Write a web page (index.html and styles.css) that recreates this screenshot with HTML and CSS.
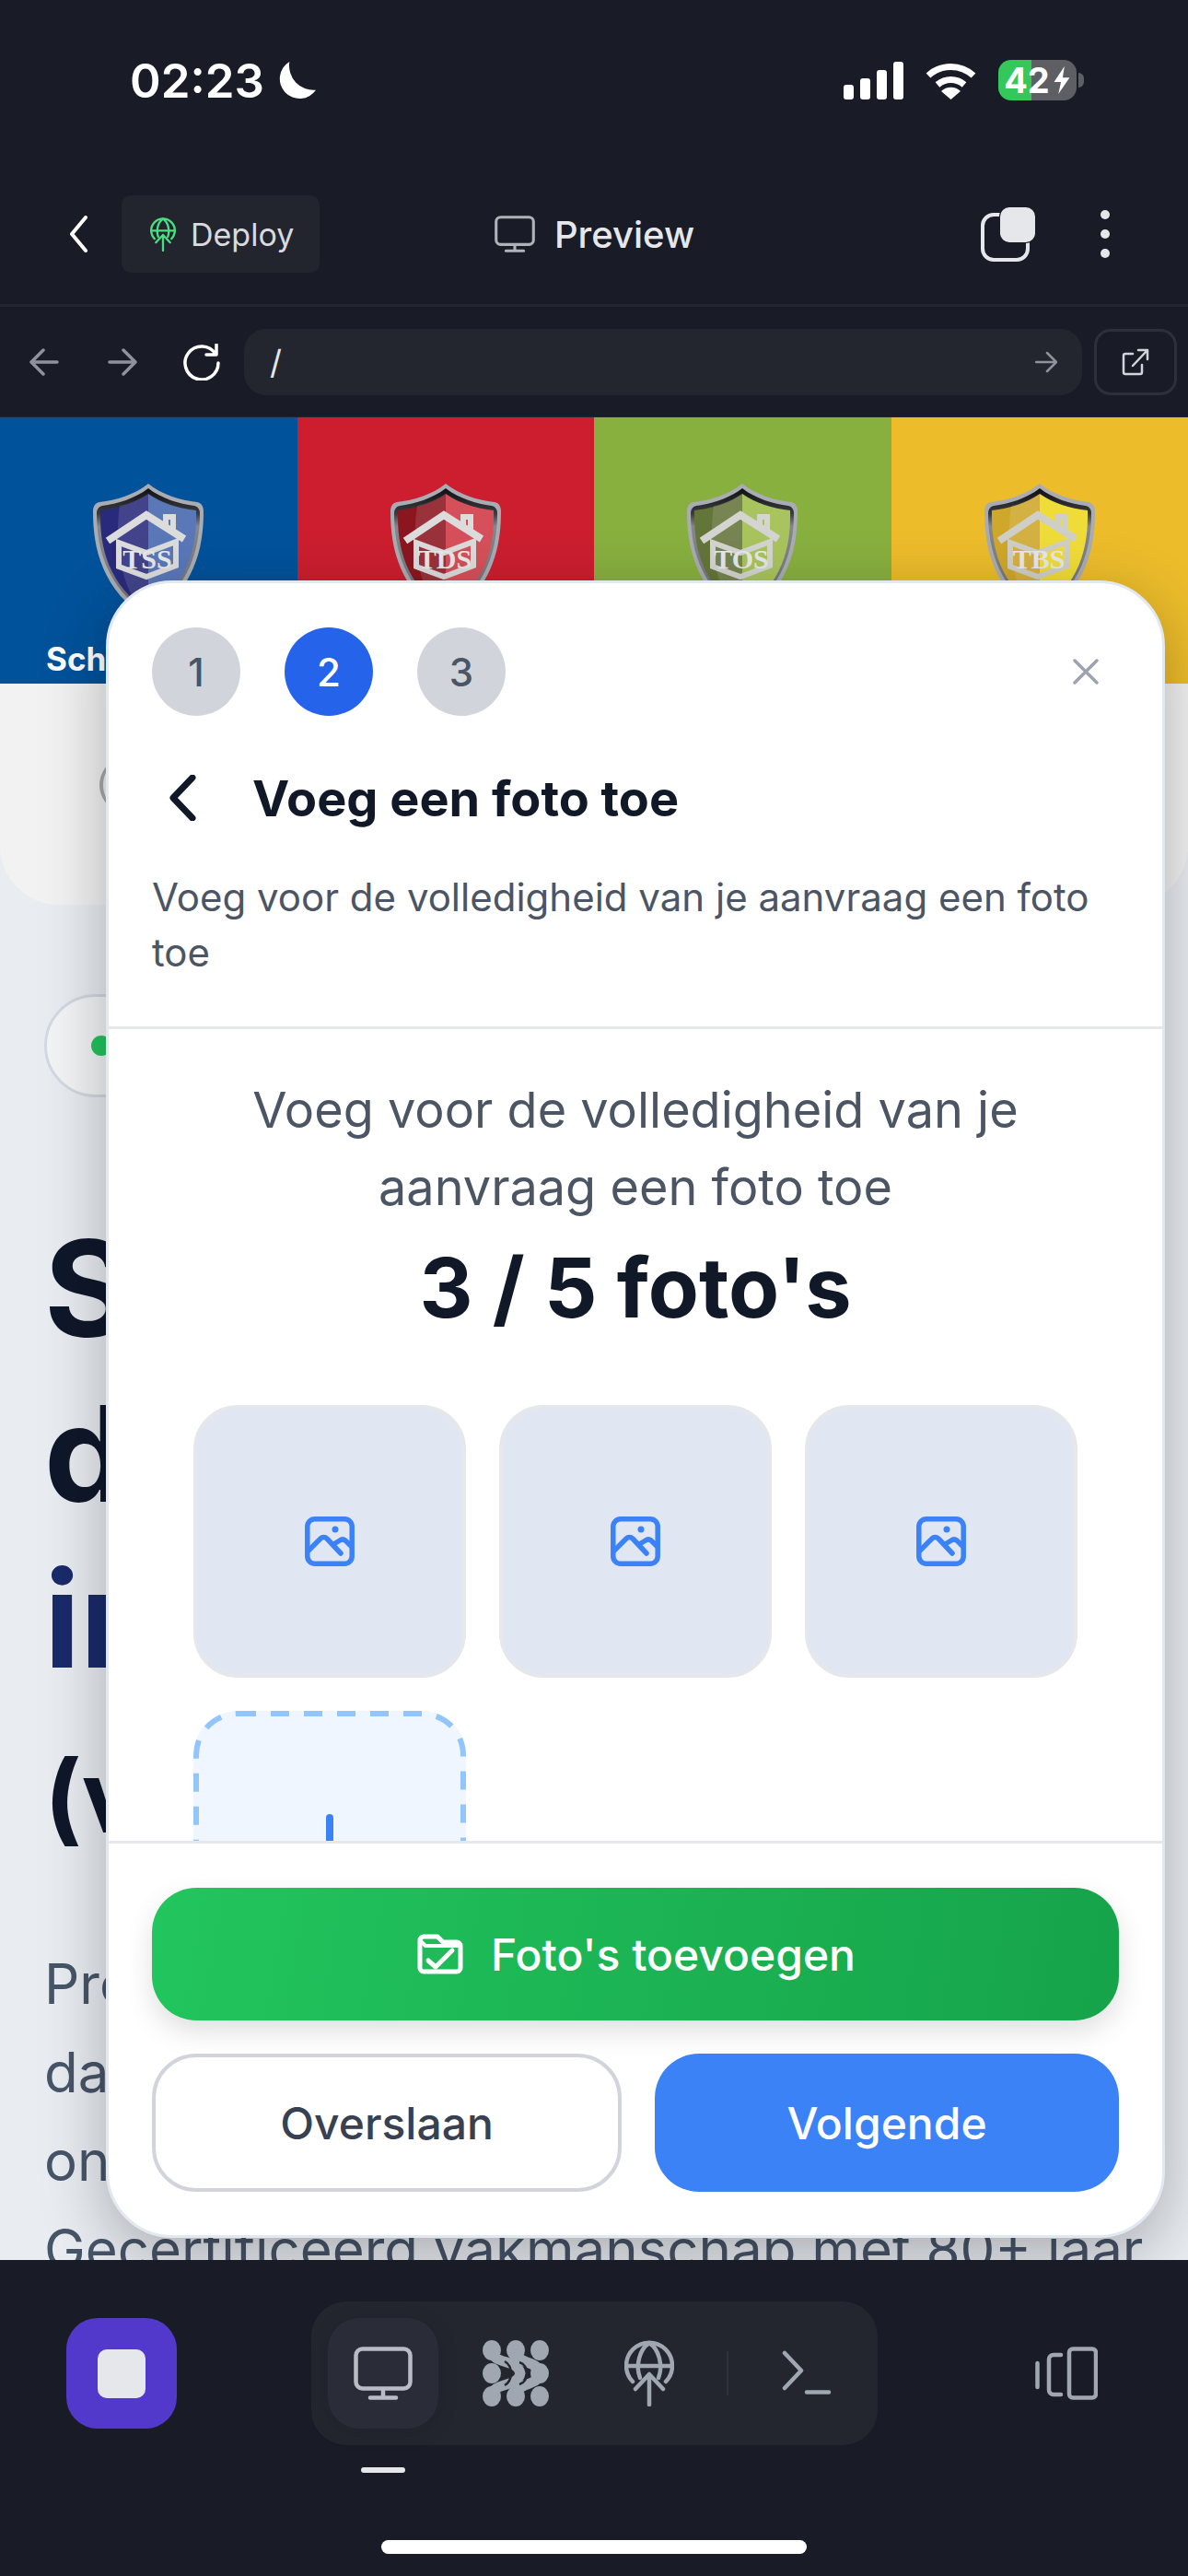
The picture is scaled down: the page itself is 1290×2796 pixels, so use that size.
FILE: index.html
```html
<!DOCTYPE html>
<html lang="nl">
<head>
  <meta charset="UTF-8" />
  <meta name="viewport" content="width=device-width, initial-scale=1.0"/>
  <title>Preview</title>
  <link rel="stylesheet" href="styles.css">
</head>
<body>

  <svg class="sprites" width="0" height="0" aria-hidden="true">
    <defs>
      <linearGradient id="shield-rim" x1="0" y1="0" x2="0" y2="1">
        <stop offset="0" stop-color="#111114"/>
        <stop offset="0.2" stop-color="#3a3b40"/>
        <stop offset="0.3" stop-color="#85878d"/>
        <stop offset="1" stop-color="#6d6f75"/>
      </linearGradient>
    </defs>
    <symbol id="i-monitor" viewBox="0 0 64 58">
      <rect x="2.500" y="2.500" width="59" height="43" rx="7" fill="none" stroke="currentColor" stroke-width="4.500"/>
      <path d="M32 46v8M18 55.500h28" fill="none" stroke="currentColor" stroke-width="4.500" stroke-linecap="round"/>
    </symbol>
    <symbol id="i-globe" viewBox="0 0 54 72">
      <g fill="none" stroke="currentColor" stroke-width="4.500" stroke-linecap="round" stroke-linejoin="round">
        <path d="M9 45A25 25 0 1 1 45 45"/>
        <path d="M2 28H52"/>
        <path d="M17 41C12 28 16 10 27 3C38 10 42 28 37 41"/>
        <path d="M27 70V37M12 53L27 37L42 53"/>
      </g>
    </symbol>
    <symbol id="i-photo" viewBox="0 0 54 54">
      <g fill="none" stroke="currentColor" stroke-width="5.500" stroke-linecap="round" stroke-linejoin="round">
        <rect x="2.800" y="2.800" width="48.400" height="48.400" rx="8"/>
        <path d="M4 37L17 24C19 22 22 22 24 24L39 40"/>
        <path d="M33 29L38 26C40 24.500 42 24.500 44 26L50 32"/>
      </g>
      <circle cx="33" cy="14" r="3.500" fill="currentColor"/>
    </symbol>
    <symbol id="i-shield" viewBox="0 0 120 150">
      <path d="M60 1C75 13 95 19 113 21C118 22 120 26 120 31C120 72 110 116 60 149C10 116 0 72 0 31C0 26 2 22 7 21C25 19 45 13 60 1Z" fill="#a9acb2"/>
      <path d="M60 6C74 17 94 23 110 25C114 26 116 29 116 33C116 72 105 113 60 144C15 113 4 72 4 33C4 29 6 26 10 25C26 23 46 17 60 6Z" fill="url(#shield-rim)"/>
      <path d="M60 12C46 22 27 28 8 30C7 72 17 110 60 140Z" style="fill:var(--shield-dark)"/>
      <path d="M60 12C74 22 93 28 112 30C113 72 103 110 60 140Z" style="fill:var(--shield-light)"/>
      <path d="M29 25C24 60 28 100 46 129L60 140V12C50 18 40 23 29 25Z" fill="#fff" opacity=".12"/>
      <g style="stroke:var(--shield-house)" fill="none">
        <path d="M16 63L58 35L99 61" stroke-width="8"/>
        <path d="M79 46V37H87V56" stroke-width="6"/>
        <path d="M28 65L58 76L90 64V90L58 102L28 91Z" stroke-width="6"/>
      </g>
    </symbol>
  </svg>

  <div class="phone">

    <header class="topbar">
      <div class="status">
        <div class="status-time">
          <span>02:23</span>
          <svg class="moon" viewBox="0 0 42 40"><path d="M14 0A21 21 0 1 0 42 30A26 26 0 0 1 14 0Z" fill="#fff"/></svg>
        </div>
        <div class="status-icons">
          <div class="signal"><i class="s1"></i><i class="s2"></i><i class="s3"></i><i class="s4"></i></div>
          <svg class="wifi" viewBox="0 0 57 42">
            <path d="M4 16A36 36 0 0 1 53 16M14 26A22 22 0 0 1 43 26" fill="none" stroke="#fff" stroke-width="7"/>
            <path d="M18 33A15 15 0 0 1 39 33L28.500 42Z" fill="#fff"/>
          </svg>
          <div class="battery">
            <div class="battery-body">
              <span>42</span>
              <svg class="bolt" viewBox="0 0 20 32"><path d="M13 0L1 18H9L6 32L19 13H11Z" fill="#fff"/></svg>
            </div>
            <div class="battery-nub"></div>
          </div>
        </div>
      </div>

      <div class="toolbar">
        <div class="toolbar-left">
          <svg class="back" viewBox="0 0 20 40"><path d="M18 2L3 20L18 38" fill="none" stroke="#fff" stroke-width="4" stroke-linecap="round" stroke-linejoin="round"/></svg>
          <button class="deploy">
            <svg class="deploy-icon"><use href="#i-globe"/></svg>
            Deploy
          </button>
        </div>
        <div class="toolbar-title">
          <svg class="title-icon"><use href="#i-monitor"/></svg>
          <span>Preview</span>
        </div>
        <div class="toolbar-right">
          <div class="copy-icon"><div class="copy-back"></div><div class="copy-front"></div></div>
          <div class="dots"><i></i><i></i><i></i></div>
        </div>
      </div>

      <div class="addressbar">
        <svg class="nav-arrow" viewBox="0 0 32 30"><path d="M30 15H3M15 2L2 15L15 28" fill="none" stroke="currentColor" stroke-width="3.500" stroke-linecap="round" stroke-linejoin="round"/></svg>
        <svg class="nav-arrow forward" viewBox="0 0 32 30"><path d="M2 15H29M17 2L30 15L17 28" fill="none" stroke="currentColor" stroke-width="3.500" stroke-linecap="round" stroke-linejoin="round"/></svg>
        <svg class="reload" viewBox="0 0 44 40"><path d="M37 11A18 18 0 1 0 40 21M38 1V12H27" fill="none" stroke="#fff" stroke-width="3.500" stroke-linecap="round" stroke-linejoin="round"/></svg>
        <div class="url">
          <span>/</span>
          <svg class="url-go" viewBox="0 0 24 24"><path d="M1 12H22M13 2L23 12L13 22" fill="none" stroke="currentColor" stroke-width="2.500" stroke-linecap="round" stroke-linejoin="round"/></svg>
        </div>
        <div class="open-external">
          <svg viewBox="0 0 30 30"><path d="M12 6H4A2 2 0 0 0 2 8V26A2 2 0 0 0 4 28H20A2 2 0 0 0 22 26V18M12 19L28 2M18 2H28V12" fill="none" stroke="#d1d5db" stroke-width="2.500" stroke-linecap="round" stroke-linejoin="round"/></svg>
        </div>
      </div>
    </header>

    <main class="page">
      <div class="tiles">
        <div class="tile tile-blue">
          <svg class="shield" viewBox="0 0 120 150"><use href="#i-shield"/><text x="59" y="93">TSS</text></svg>
          <div class="tile-label">Sch</div>
        </div>
        <div class="tile tile-red">
          <svg class="shield" viewBox="0 0 120 150"><use href="#i-shield"/><text x="59" y="93">TDS</text></svg>
        </div>
        <div class="tile tile-green">
          <svg class="shield" viewBox="0 0 120 150"><use href="#i-shield"/><text x="59" y="93">TOS</text></svg>
        </div>
        <div class="tile tile-yellow">
          <svg class="shield" viewBox="0 0 120 150"><use href="#i-shield"/><text x="59" y="93">TBS</text></svg>
        </div>
      </div>

      <div class="brand-card"><div class="brand-logo"></div></div>

      <section class="hero">
        <div class="pill"><i class="pill-dot"></i></div>
        <h1>Snel<br>door<br><span class="accent">in</span></h1>
        <h2>(v</h2>
        <p>Pro<br>da<br>on<br>Gecertificeerd vakmanschap met 80+ jaar</p>
      </section>

      <div class="modal">
        <div class="modal-head">
          <div class="steps-row">
            <div class="steps">
              <div class="step">1</div>
              <div class="step step-active">2</div>
              <div class="step">3</div>
            </div>
            <svg class="close" viewBox="0 0 28 28"><path d="M2 2L26 26M26 2L2 26" fill="none" stroke="currentColor" stroke-width="3.500" stroke-linecap="round"/></svg>
          </div>
          <div class="title-row">
            <svg class="modal-back" viewBox="0 0 30 50"><path d="M26 3L5 25L26 47" fill="none" stroke="#111827" stroke-width="7" stroke-linecap="round" stroke-linejoin="round"/></svg>
            <h3>Voeg een foto toe</h3>
          </div>
          <p class="modal-sub">Voeg voor de volledigheid van je aanvraag een foto toe</p>
        </div>

        <div class="modal-body">
          <p class="body-text">Voeg voor de volledigheid van je aanvraag een foto toe</p>
          <div class="count">3 / 5 foto's</div>
          <div class="photos">
            <div class="photo"><svg class="photo-icon"><use href="#i-photo"/></svg></div>
            <div class="photo"><svg class="photo-icon"><use href="#i-photo"/></svg></div>
            <div class="photo"><svg class="photo-icon"><use href="#i-photo"/></svg></div>
            <div class="photo photo-add">
              <svg class="dashes" viewBox="0 0 296 296"><rect x="3" y="3" width="290" height="290" rx="45" fill="none" stroke="#93c5fd" stroke-width="6" stroke-dasharray="20 16"/></svg>
              <i class="plus"></i>
            </div>
          </div>
        </div>

        <div class="modal-foot">
          <button class="btn btn-green">
            <svg class="folder" viewBox="0 0 50 44"><g fill="none" stroke="#fff" stroke-width="5" stroke-linecap="round" stroke-linejoin="round"><path d="M3 7A4 4 0 0 1 7 3H22L28 9H43A4 4 0 0 1 47 13V37A4 4 0 0 1 43 41H7A4 4 0 0 1 3 37Z"/><path d="M3 7L9 13H46" stroke-width="4"/><path d="M12 29L20 36L38 18"/></g></svg>
            Foto's toevoegen
          </button>
          <div class="btn-row">
            <button class="btn btn-outline">Overslaan</button>
            <button class="btn btn-blue">Volgende</button>
          </div>
        </div>
      </div>
    </main>

    <nav class="bottombar">
      <div class="bar-main">
        <div class="stop"><div class="stop-square"></div></div>
        <div class="tabs">
          <div class="tab-active"><svg class="tab-monitor"><use href="#i-monitor"/></svg></div>
          <svg class="tab-neural" viewBox="0 0 72 72">
            <g fill="#a0a7b1">
              <ellipse cx="10" cy="11" rx="10" ry="11"/><ellipse cx="36" cy="11" rx="10" ry="11"/><ellipse cx="62" cy="11" rx="10" ry="11"/>
              <ellipse cx="10" cy="36" rx="10" ry="11"/><ellipse cx="62" cy="36" rx="10" ry="11"/>
              <ellipse cx="10" cy="61" rx="10" ry="11"/><ellipse cx="36" cy="61" rx="10" ry="11"/><ellipse cx="62" cy="61" rx="10" ry="11"/>
            </g>
            <g fill="none" stroke="#a0a7b1" stroke-width="11">
              <path d="M10 11C10 27 38 20 41 36C38 52 10 45 10 61"/>
              <path d="M36 11C36 27 62 22 62 36C62 50 36 45 36 61"/>
            </g>
            <path d="M24 23C33 28 33 44 24 49" fill="none" stroke="#23262f" stroke-width="2.500"/>
            <path d="M40 24C51 27 51 45 40 48" fill="none" stroke="#23262f" stroke-width="2.500"/>
          </svg>
          <svg class="tab-globe"><use href="#i-globe"/></svg>
          <div class="tab-sep"></div>
          <svg class="tab-terminal" viewBox="0 0 54 50"><path d="M3 3L21 22L3 41M27 45.500H51" fill="none" stroke="currentColor" stroke-width="4.500" stroke-linecap="round" stroke-linejoin="round"/></svg>
        </div>
        <svg class="devices" viewBox="0 0 68 58"><g fill="none" stroke="currentColor" stroke-width="4.500" stroke-linecap="round" stroke-linejoin="round"><path d="M2.500 18V44"/><path d="M28 9H20A5 5 0 0 0 15 14V47A5 5 0 0 0 20 52H28"/><rect x="37" y="2.500" width="29" height="53" rx="4"/></g></svg>
      </div>
      <div class="tab-indicator"></div>
      <div class="home-indicator"></div>
    </nav>

  </div>

</body>
</html>
```

FILE: styles.css
```css
* {
  box-sizing: border-box;
}
body {
  margin: 0;
  font-family: Inter, "Noto Sans", sans-serif;
  background: #191c26;
}
i {
  display: block;
}
button {
  font-family: inherit;
  border: 0;
  padding: 0;
}
svg {
  display: block;
  flex: none;
}
.sprites {
  position: absolute;
}
.phone {
  width: 1290px;
  height: 2796px;
  display: flex;
  flex-direction: column;
  overflow: hidden;
}

/* top bars */
.topbar {
  background: #191c26;
  color: #fff;
}
.status {
  height: 178px;
  padding: 64px 113px 0 141px;
  display: flex;
  justify-content: space-between;
  align-items: flex-start;
}
.status-time {
  display: flex;
  align-items: center;
  gap: 13px;
  height: 46px;
  font-size: 51px;
  font-weight: 600;
}
.moon {
  width: 43px;
  height: 41px;
}
.status-icons {
  display: flex;
  align-items: center;
  gap: 23px;
  height: 46px;
}
.signal {
  display: flex;
  align-items: flex-end;
  gap: 7px;
  height: 41px;
}
.signal i {
  width: 11px;
  background: #fff;
  border-radius: 3px;
}
.s1 { height: 16px; }
.s2 { height: 23px; }
.s3 { height: 32px; }
.s4 { height: 41px; }
.wifi {
  width: 57px;
  height: 42px;
}
.battery {
  display: flex;
  align-items: center;
  gap: 2px;
}
.battery-body {
  width: 85px;
  height: 44px;
  border-radius: 14px;
  background: linear-gradient(90deg, #34c759 42%, #5e5f65 42%);
  display: flex;
  align-items: center;
  justify-content: center;
  gap: 3px;
  font-size: 38px;
  font-weight: 700;
}
.bolt {
  width: 20px;
  height: 30px;
}
.battery-nub {
  width: 6px;
  height: 16px;
  background: #5e5f65;
  border-radius: 0 6px 6px 0;
}
.toolbar {
  height: 152px;
  display: grid;
  grid-template-columns: 1fr auto 1fr;
  align-items: center;
  padding: 0 85px 0 75px;
}
.toolbar-left {
  display: flex;
  align-items: center;
  gap: 37px;
}
.back {
  width: 20px;
  height: 40px;
}
.deploy {
  width: 215px;
  height: 84px;
  background: #22252e;
  border-radius: 10px;
  color: #d8dae0;
  font-size: 34px;
  display: flex;
  align-items: center;
  padding-left: 31px;
  gap: 16px;
}
.deploy-icon {
  width: 28px;
  height: 37px;
  color: #4ade80;
}
.toolbar-title {
  margin-left: 11px;
  display: flex;
  align-items: center;
  gap: 21px;
  font-size: 40px;
  font-weight: 500;
  color: #e5e7eb;
}
.title-icon {
  width: 44px;
  height: 40px;
  color: #aeb2b9;
}
.toolbar-right {
  display: flex;
  justify-content: flex-end;
  align-items: center;
  gap: 71px;
}
.copy-icon {
  width: 59px;
  height: 59px;
  position: relative;
}
.copy-back {
  position: absolute;
  left: 0;
  bottom: 0;
  width: 53px;
  height: 53px;
  border: 4px solid #e5e7eb;
  border-radius: 14px;
}
.copy-front {
  position: absolute;
  right: 0;
  top: 0;
  width: 38px;
  height: 38px;
  background: #e5e7eb;
  border-radius: 10px;
  box-shadow: 0 0 0 1px #191c26;
}
.dots {
  display: flex;
  flex-direction: column;
  gap: 11px;
}
.dots i {
  width: 10px;
  height: 10px;
  border-radius: 50%;
  background: #e5e7eb;
}
.addressbar {
  height: 123px;
  border-top: 3px solid #23262f;
  border-bottom: 1px solid #23262f;
  display: flex;
  align-items: center;
  padding: 0 12px 0 32px;
  color: #8e929c;
}
.nav-arrow {
  width: 32px;
  height: 30px;
}
.forward {
  margin-left: 53px;
}
.reload {
  width: 44px;
  height: 40px;
  margin-left: 48px;
}
.url {
  margin-left: 24px;
  flex: 1;
  height: 72px;
  background: #23262f;
  border-radius: 24px;
  display: flex;
  align-items: center;
  justify-content: space-between;
  padding: 0 27px 0 28px;
  color: #e5e7eb;
  font-size: 36px;
}
.url-go {
  width: 24px;
  height: 24px;
  color: #8e929c;
}
.open-external {
  margin-left: 13px;
  width: 90px;
  height: 72px;
  border: 3px solid #2d3039;
  border-radius: 18px;
  display: flex;
  align-items: center;
  justify-content: center;
}
.open-external svg {
  width: 30px;
  height: 30px;
}

/* page behind the dialog */
.page {
  flex: 1;
  position: relative;
  overflow: hidden;
  background: #e9ecf1;
}
.tiles {
  display: grid;
  grid-template-columns: repeat(4, 1fr);
  height: 289px;
}
.tile {
  display: flex;
  flex-direction: column;
  align-items: center;
  padding-top: 71px;
  color: #fff;
  overflow: hidden;
}
.tile-blue {
  background: #00529b;
  --shield-dark: #2a2a7c;
  --shield-light: #5a78b8;
  --shield-house: #dcdcdc;
}
.tile-red {
  background: #cc1e2f;
  --shield-dark: #8c1620;
  --shield-light: #d5505a;
  --shield-house: #dcdcdc;
}
.tile-green {
  background: #88b03f;
  --shield-dark: #64753a;
  --shield-light: #a9c45e;
  --shield-house: #d4d4d0;
}
.tile-yellow {
  background: #ecbc2b;
  --shield-dark: #cfa72a;
  --shield-light: #f0dc38;
  --shield-house: #cfcfc8;
}
.shield {
  width: 120px;
  height: 150px;
}
.shield text {
  font-family: "Liberation Serif", serif;
  font-size: 30px;
  font-weight: 700;
  text-anchor: middle;
  fill: #e8e8e8;
}
.tile-label {
  align-self: flex-start;
  margin: 20px 0 0 50px;
  font-size: 35px;
  font-weight: 700;
  white-space: nowrap;
}
.brand-card {
  height: 240px;
  background: #f2f2f3;
  border-radius: 0 0 64px 64px;
  padding: 68px 0 0 108px;
}
.brand-logo {
  width: 120px;
  height: 84px;
  border-left: 4px solid #a9a9ab;
  border-radius: 50% 0 0 50%;
}
.hero {
  padding: 97px 0 0 48px;
}
.pill {
  width: 400px;
  height: 112px;
  border: 3px solid #d3d9e2;
  border-radius: 56px;
  background: #f3f4f6;
  display: flex;
  align-items: center;
  padding-left: 48px;
}
.pill-dot {
  width: 22px;
  height: 22px;
  border-radius: 50%;
  background: #22c55e;
}
.hero h1 {
  margin: 117px 0 0;
  font-size: 144px;
  line-height: 180px;
  font-weight: 700;
  color: #0f172a;
}
.accent {
  color: #1a2b6b;
}
.hero h2 {
  margin: 42px 0 0;
  font-size: 108px;
  line-height: 120px;
  font-weight: 700;
  color: #0f172a;
}
.hero p {
  margin: 95px 0 0;
  font-size: 60px;
  line-height: 96px;
  color: #475569;
  white-space: nowrap;
}

/* dialog */
.modal {
  position: absolute;
  left: 115px;
  top: 177px;
  width: 1150px;
  height: 1799px;
  background: #fff;
  border: 3px solid #e2e8f0;
  border-radius: 72px;
  box-shadow: 0 20px 70px rgba(0, 0, 0, 0.28);
  display: flex;
  flex-direction: column;
  overflow: hidden;
}
.modal-head {
  height: 484px;
  flex: none;
  padding: 48px 47px 0;
  border-bottom: 3px solid #e5e7eb;
}
.steps-row {
  display: flex;
  justify-content: space-between;
  align-items: center;
}
.steps {
  display: flex;
  gap: 48px;
}
.step {
  width: 96px;
  height: 96px;
  border-radius: 50%;
  background: #d1d5db;
  color: #4b5563;
  font-size: 42px;
  font-weight: 500;
  display: flex;
  align-items: center;
  justify-content: center;
}
.step-active {
  background: #2563eb;
  color: #fff;
}
.close {
  width: 28px;
  height: 28px;
  margin-right: 22px;
  color: #9ca3af;
}
.title-row {
  display: flex;
  align-items: center;
  margin-top: 64px;
  height: 50px;
  padding-left: 18px;
  gap: 61px;
}
.modal-back {
  width: 30px;
  height: 50px;
}
.title-row h3 {
  margin: 0;
  font-size: 54px;
  font-weight: 700;
  color: #111827;
}
.modal-sub {
  margin: 53px 0 0;
  font-size: 42px;
  line-height: 60px;
  color: #4b5563;
}
.modal-body {
  flex: 1;
  min-height: 0;
  overflow: hidden;
  padding: 46px 92px 0;
  text-align: center;
}
.body-text {
  margin: 0;
  font-size: 54px;
  line-height: 84px;
  color: #4b5563;
}
.count {
  margin-top: 13px;
  font-size: 90px;
  line-height: 108px;
  font-weight: 700;
  color: #111827;
}
.photos {
  margin-top: 73px;
  display: grid;
  grid-template-columns: repeat(3, 296px);
  gap: 36px;
}
.photo {
  height: 296px;
  background: #e0e7f3;
  border: 4px solid #e5e7eb;
  border-radius: 48px;
  display: flex;
  align-items: center;
  justify-content: center;
  color: #3b82f6;
}
.photo-icon {
  width: 54px;
  height: 54px;
}
.photo-add {
  background: #eff6ff;
  border: 0;
  position: relative;
}
.dashes {
  position: absolute;
  inset: 0;
  width: 100%;
  height: 100%;
}
.plus {
  width: 8px;
  height: 72px;
  border-radius: 4px;
  background: #3b82f6;
}
.modal-foot {
  flex: none;
  border-top: 3px solid #e5e7eb;
  padding: 48px 47px 47px;
  display: flex;
  flex-direction: column;
  gap: 36px;
}
.btn {
  font-size: 48px;
  font-weight: 500;
  border-radius: 48px;
  display: flex;
  align-items: center;
  justify-content: center;
  color: #fff;
}
.btn-green {
  height: 144px;
  gap: 30px;
  padding-left: 2px;
  background: linear-gradient(100deg, #22c55e, #16a34a);
  box-shadow: 0 12px 30px rgba(0, 0, 0, 0.13);
}
.folder {
  width: 50px;
  height: 44px;
}
.btn-row {
  display: grid;
  grid-template-columns: 510px 504px;
  gap: 36px;
}
.btn-row .btn {
  height: 150px;
}
.btn-outline {
  background: #fff;
  border: 4px solid #d1d5db;
  color: #374151;
}
.btn-blue {
  background: #3b82f6;
}

/* bottom bar */
.bottombar {
  height: 343px;
  flex: none;
  background: #191c26;
  padding-top: 45px;
}
.bar-main {
  display: flex;
  align-items: center;
  padding: 0 98px 0 72px;
  color: #a0a7b1;
}
.stop {
  width: 120px;
  height: 120px;
  border-radius: 34px;
  background: #5239cc;
  display: flex;
  align-items: center;
  justify-content: center;
}
.stop-square {
  width: 52px;
  height: 53px;
  border-radius: 10px;
  background: #e5e7eb;
}
.tabs {
  margin-left: 146px;
  width: 615px;
  height: 156px;
  background: #23262f;
  border-radius: 38px;
  display: flex;
  align-items: center;
  padding-left: 18px;
}
.tab-active {
  width: 120px;
  height: 120px;
  border-radius: 34px;
  display: flex;
  align-items: center;
  justify-content: center;
  background: #2a2c38;
  box-shadow: 0 4px 24px rgba(0, 0, 0, 0.1);
  color: #b9bcc4;
}
.tab-monitor {
  width: 64px;
  height: 58px;
}
.tab-neural {
  width: 72px;
  height: 72px;
  margin-left: 48px;
}
.tab-globe {
  width: 54px;
  height: 72px;
  margin-left: 82px;
}
.tab-sep {
  width: 2px;
  height: 48px;
  margin-left: 57px;
  background: #2f323b;
}
.tab-terminal {
  width: 54px;
  height: 50px;
  margin-left: 58px;
}
.devices {
  margin-left: auto;
  width: 68px;
  height: 58px;
}
.tab-indicator {
  width: 48px;
  height: 6px;
  margin: 24px 0 0 392px;
  border-radius: 3px;
  background: #e5e7eb;
}
.home-indicator {
  width: 462px;
  height: 15px;
  margin: 73px 0 0 414px;
  border-radius: 8px;
  background: #fff;
}
```
